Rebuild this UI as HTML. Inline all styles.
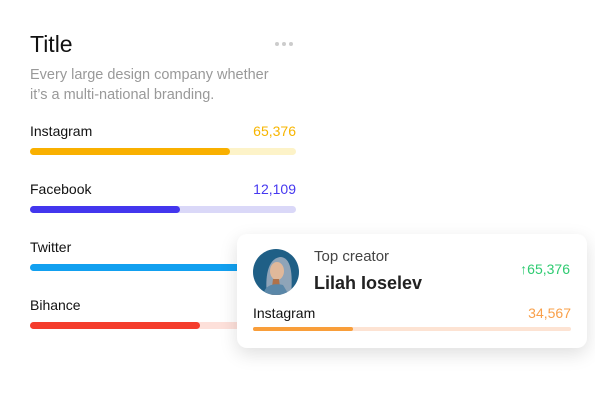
<!DOCTYPE html><html><head><style>
body{margin:0;width:595px;height:403px;background:#fff;font-family:"Liberation Sans",sans-serif;position:relative;overflow:hidden}
.a{position:absolute;white-space:nowrap}
.bar{position:absolute;left:30px;width:266px;height:7px;border-radius:4px}
.bar i{display:block;height:100%;border-radius:4px}
.lab{font-size:14px;color:#111}
.val{font-size:14px;text-align:right;right:299px}
</style></head><body>
<div class="a" style="left:30px;top:31px;font-size:23px;color:#111">Title</div>
<div class="a" style="left:275px;top:42px;display:flex;gap:3px"><span style="width:4px;height:4px;border-radius:2px;background:#ccc"></span><span style="width:4px;height:4px;border-radius:2px;background:#ccc"></span><span style="width:4px;height:4px;border-radius:2px;background:#ccc"></span></div>
<div class="a" style="left:30px;top:65px;font-size:14.5px;color:#999;line-height:20px">Every large design company whether<br>it’s a multi-national branding.</div>

<div class="a lab" style="left:30px;top:123px">Instagram</div>
<div class="a val" style="top:123px;color:#f7b500">65,376</div>
<div class="bar" style="top:148px;background:#fdf3c8"><i style="width:200px;background:#f9b000"></i></div>

<div class="a lab" style="left:30px;top:181px">Facebook</div>
<div class="a val" style="top:181px;color:#4638f0">12,109</div>
<div class="bar" style="top:206px;background:#dad8f8"><i style="width:150px;background:#4336ee"></i></div>

<div class="a lab" style="left:30px;top:239px">Twitter</div>
<div class="bar" style="top:264px;background:#cfe9fb"><i style="width:240px;background:#12a0f0"></i></div>

<div class="a lab" style="left:30px;top:297px">Bihance</div>
<div class="bar" style="top:322px;background:#fde0da"><i style="width:170px;background:#f43c2c"></i></div>

<div class="a" style="left:237px;top:234px;width:350px;height:114px;background:#fff;border-radius:10px;box-shadow:0 6px 18px rgba(0,0,0,.13)">
<svg class="a" style="left:16px;top:15px" width="46" height="46" viewBox="0 0 46 46"><defs><clipPath id="c"><circle cx="23" cy="23" r="23"/></clipPath></defs><g clip-path="url(#c)"><rect width="46" height="46" fill="#1f5f86"/><path d="M14 46 C12 30 14 10 27 8 C38 8 40 24 38 46Z" fill="#8fa4b8"/><ellipse cx="24" cy="22" rx="7" ry="9" fill="#e0b89a"/><path d="M20 30 L18 46 L28 46 L26 30Z" fill="#b0724a"/><path d="M10 46 C12 36 20 34 30 36 L36 46Z" fill="#5a87a8"/></g></svg>
<div class="a" style="left:77px;top:14px;font-size:15px;color:#444">Top creator</div>
<div class="a" style="left:77px;top:39px;font-size:18px;font-weight:bold;color:#222">Lilah Ioselev</div>
<div class="a" style="right:17px;top:27px;font-size:14px;color:#2ecb71">↑65,376</div>
<div class="a" style="left:16px;top:71px;font-size:14px;color:#111">Instagram</div>
<div class="a" style="right:16px;top:71px;font-size:14px;color:#f9a04a">34,567</div>
<div class="a" style="left:16px;top:93px;width:318px;height:4px;border-radius:2px;background:#fde3d3"><i style="display:block;width:100px;height:100%;border-radius:2px;background:#f99e3a"></i></div>
</div>
</body></html>
